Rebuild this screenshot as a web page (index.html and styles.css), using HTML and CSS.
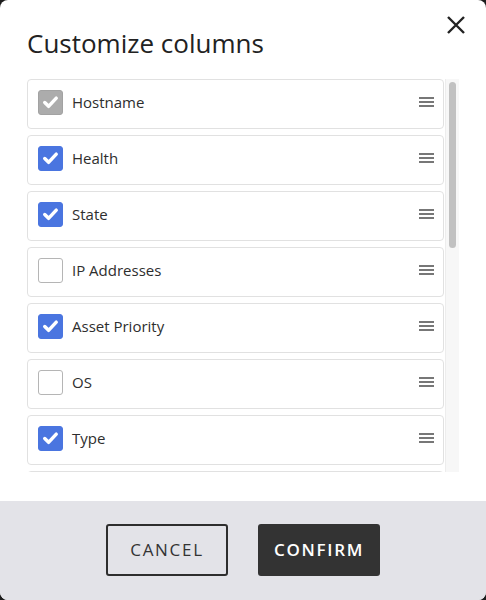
FILE: index.html
```html
<!DOCTYPE html>
<html lang="en">
<head>
    <meta charset="UTF-8">
    <meta name="viewport" content="width=device-width, initial-scale=1.0">
    <title>Customize columns</title>
    <link rel="stylesheet" href="styles.css">
</head>
<body>
    <div class="modal">
        <button class="close" aria-label="Close">
            <svg width="20" height="20" viewBox="0 0 20 20">
                <path d="M2 2 L18 18 M18 2 L2 18" stroke="#222" stroke-width="2.4" fill="none"/>
            </svg>
        </button>

        <h1 class="title">Customize columns</h1>

        <div class="list-wrap">
            <div class="column-list">
                <div class="column-row">
                    <span class="check locked"><svg viewBox="0 0 24 24"><path d="M6 12.5 L10 16.5 L18 8" /></svg></span>
                    <span class="label">Hostname</span>
                    <span class="handle"><i></i><i></i><i></i></span>
                </div>
                <div class="column-row">
                    <span class="check on"><svg viewBox="0 0 24 24"><path d="M6 12.5 L10 16.5 L18 8" /></svg></span>
                    <span class="label">Health</span>
                    <span class="handle"><i></i><i></i><i></i></span>
                </div>
                <div class="column-row">
                    <span class="check on"><svg viewBox="0 0 24 24"><path d="M6 12.5 L10 16.5 L18 8" /></svg></span>
                    <span class="label">State</span>
                    <span class="handle"><i></i><i></i><i></i></span>
                </div>
                <div class="column-row">
                    <span class="check"></span>
                    <span class="label">IP Addresses</span>
                    <span class="handle"><i></i><i></i><i></i></span>
                </div>
                <div class="column-row">
                    <span class="check on"><svg viewBox="0 0 24 24"><path d="M6 12.5 L10 16.5 L18 8" /></svg></span>
                    <span class="label">Asset Priority</span>
                    <span class="handle"><i></i><i></i><i></i></span>
                </div>
                <div class="column-row">
                    <span class="check"></span>
                    <span class="label">OS</span>
                    <span class="handle"><i></i><i></i><i></i></span>
                </div>
                <div class="column-row">
                    <span class="check on"><svg viewBox="0 0 24 24"><path d="M6 12.5 L10 16.5 L18 8" /></svg></span>
                    <span class="label">Type</span>
                    <span class="handle"><i></i><i></i><i></i></span>
                </div>
                <div class="column-row"></div>
            </div>
            <div class="scrollbar"><div class="thumb"></div></div>
        </div>

        <div class="footer">
            <button class="btn cancel">CANCEL</button>
            <button class="btn confirm">CONFIRM</button>
        </div>
    </div>
</body>
</html>
```

FILE: styles.css
```css
* {
    box-sizing: border-box;
}

body {
    margin: 0;
    background-color: #1c1c1c;
    font-family: "Open Sans", "Liberation Sans", sans-serif;
    color: #333;
}

.modal {
    position: relative;
    height: 600px;
    background-color: #ffffff;
    border-radius: 8px;
    overflow: hidden;
    display: flex;
    flex-direction: column;
}

.close {
    position: absolute;
    top: 15px;
    right: 20px;
    width: 20px;
    height: 20px;
    padding: 0;
    border: none;
    background: none;
}

.title {
    margin: 27px 0 20px 27px;
    font-size: 26px;
    line-height: 32px;
    font-weight: 400;
    color: #222;
}

.list-wrap {
    margin-left: 27px;
    width: 432px;
    height: 393px;
    display: flex;
}

.column-list {
    flex: 1;
    overflow: hidden;
    display: flex;
    flex-direction: column;
    gap: 6px;
    padding-right: 1px;
}

.scrollbar {
    width: 14px;
    background-color: #f7f7f7;
    border-left: 1px solid #ededed;
    padding: 3px 3px 0 3px;
}

.thumb {
    height: 166px;
    background-color: #c1c1c1;
    border-radius: 4px;
}

.column-row {
    flex: none;
    height: 50px;
    border: 1px solid #e1e1e1;
    border-radius: 4px;
    display: flex;
    align-items: center;
    padding: 0 9px 4px 10px;
}

.check {
    width: 25px;
    height: 25px;
    border: 1px solid #b5b5b5;
    border-radius: 3px;
    background-color: #fff;
    display: flex;
    align-items: center;
    justify-content: center;
}

.check svg {
    width: 24px;
    height: 24px;
    fill: none;
    stroke: #fff;
    stroke-width: 3.6;
    stroke-linecap: round;
    stroke-linejoin: round;
}

.check.on {
    background-color: #4a75e0;
    border-color: #4a75e0;
}

.check.locked {
    background-color: #acacac;
    border-color: #a2a2a2;
}

.label {
    flex: 1;
    margin-left: 9px;
    font-size: 15px;
    color: #2e2e2e;
}

.handle {
    width: 15px;
    display: flex;
    flex-direction: column;
    gap: 2px;
}

.handle i {
    display: block;
    height: 2px;
    background-color: #777;
}

.footer {
    margin-top: auto;
    height: 99px;
    background-color: #e3e3e8;
    display: flex;
    justify-content: center;
    align-items: center;
    gap: 30px;
    padding-bottom: 2px;
}

.btn {
    width: 122px;
    height: 52px;
    border-radius: 3px;
    font-family: "Open Sans", "Liberation Sans", sans-serif;
    font-size: 17px;
    letter-spacing: 1.7px;
}

.cancel {
    border: 2px solid #2e2e2e;
    background-color: transparent;
    color: #333;
    font-weight: 500;
}

.confirm {
    border: 2px solid #333;
    background-color: #333;
    color: #fff;
    font-weight: 600;
}
```
